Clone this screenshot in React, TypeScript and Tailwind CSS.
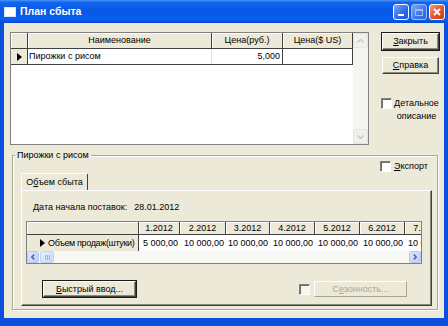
import React from "react";

type Col = { id: number; title: string; w: number };

const topCols: Col[] = [
  { id: 1, title: "", w: 17 },
  { id: 2, title: "Наименование", w: 184 },
  { id: 3, title: "Цена(руб.)", w: 71 },
  { id: 4, title: "Цена($ US)", w: 70 },
];

const months: Col[] = [
  { id: 1, title: "1.2012", w: 41 },
  { id: 2, title: "2.2012", w: 46 },
  { id: 3, title: "3.2012", w: 44 },
  { id: 4, title: "4.2012", w: 45 },
  { id: 5, title: "5.2012", w: 45 },
  { id: 6, title: "6.2012", w: 45 },
  { id: 7, title: "7.2012", w: 45 },
];

const sales: string[] = [
  "5 000,00",
  "10 000,00",
  "10 000,00",
  "10 000,00",
  "10 000,00",
  "10 000,00",
  "10 000,00",
];

function Arrow() {
  return (
    <div className="w-0 h-0 shrink-0 border-y-[4px] border-y-transparent border-l-[5px] border-l-black" />
  );
}

function CheckBox({ disabled }: { disabled?: boolean }) {
  return (
    <div
      className={`w-[11px] h-[11px] shrink-0 border-t border-l border-t-[#808080] border-l-[#808080] border-b border-r border-b-white border-r-white shadow-[inset_1px_1px_0_#6a6a6a]
        ${disabled ? "bg-[#F6F5F0]" : "bg-white"}`}
    />
  );
}

function Button({
  children,
  strong,
  disabled,
  className,
}: {
  children: React.ReactNode;
  strong?: boolean;
  disabled?: boolean;
  className: string;
}) {
  return (
    <div
      className={`${className} ${strong ? "border border-[#1a1a1a]" : "border border-transparent"}`}
    >
      <div
        className={`h-full flex items-center justify-center bg-[#ECE9D8] border-t border-l border-white border-r border-b
          ${disabled ? "border-r-[#A7A491] border-b-[#A7A491] text-[#A9A696]" : "border-r-[#404040] border-b-[#404040] shadow-[inset_-1px_-1px_0_#8c8a80]"}`}
      >
        {children}
      </div>
    </div>
  );
}

function TitleBar() {
  return (
    <div className="h-[23px] shrink-0 flex items-center pl-[4px] pr-[3px] bg-[linear-gradient(to_bottom,#4a95f7_0%,#1266ee_10%,#0858e4_45%,#0a5ff0_85%,#0747d0_100%)]">
      <div className="w-[12px] h-[10px] bg-white border border-[#dbe6fb] mt-[1px]" />
      <span className="ml-[4px] text-white font-bold text-[10.5px] leading-none">
        План сбыта
      </span>
      <div className="ml-auto flex gap-[2px] mt-[1px]">
        <div className="w-[16px] h-[16px] rounded-[3px] border border-white bg-[linear-gradient(135deg,#7aa9fb,#2b68e8_60%,#1e55d4)] flex items-end pl-[4px] pb-[3px]">
          <div className="w-[6px] h-[2px] bg-white" />
        </div>
        <div className="w-[16px] h-[16px] rounded-[3px] border border-[#9dbcf5] bg-[linear-gradient(135deg,#7aa9fb,#3d75ea_60%,#3363d8)] flex items-center justify-center">
          <div className="w-[8px] h-[7px] border border-[#9dbcf5] border-t-2" />
        </div>
        <div className="w-[16px] h-[16px] rounded-[3px] border border-white bg-[linear-gradient(135deg,#f29a7a,#e2552d_55%,#c93d14)] flex items-center justify-center">
          <svg width="8" height="8" viewBox="0 0 8 8">
            <path d="M1 1 L7 7 M7 1 L1 7" stroke="white" strokeWidth="1.8" />
          </svg>
        </div>
      </div>
    </div>
  );
}

function TopGrid() {
  return (
    <div className="w-[359px] h-[113px] shrink-0 border border-[#808080] bg-white flex">
      <div className="flex-1 flex flex-col">
        <div className="h-[16px] flex border-b border-[#404040]">
          {topCols.map((col: Col) => (
            <div
              key={col.id}
              style={{ width: col.w }}
              className="h-full bg-[#ECE9D8] border-r border-[#404040] shadow-[inset_1px_1px_0_#fff] flex items-center justify-center"
            >
              {col.title}
            </div>
          ))}
        </div>
        <div className="h-[16px] flex border-b border-[#404040] w-[342px]">
          <div className="w-[17px] h-full bg-[#ECE9D8] border-r border-[#404040] flex items-center justify-center pl-[1px]">
            <Arrow />
          </div>
          <div className="w-[184px] h-full border-r border-[#E4E2DA] flex items-center pl-[1px]">
            Пирожки с рисом
          </div>
          <div className="w-[71px] h-full border-r border-[#404040] flex items-center justify-end pr-[2px]">
            5,000
          </div>
          <div className="w-[70px] h-full border-r border-[#404040]" />
        </div>
      </div>
      <div className="w-[15px] flex flex-col bg-[#F6F5F1]">
        <div className="h-[15px] border border-[#E6E4DB] rounded-[2px] bg-[#F1F0EA] flex items-center justify-center">
          <svg width="7" height="4" viewBox="0 0 7 4">
            <path d="M0.5 3.5 L3.5 0.5 L6.5 3.5" stroke="#C9C7BA" strokeWidth="1.4" fill="none" />
          </svg>
        </div>
        <div className="flex-1" />
        <div className="h-[15px] border border-[#E6E4DB] rounded-[2px] bg-[#F1F0EA] flex items-center justify-center">
          <svg width="7" height="4" viewBox="0 0 7 4">
            <path d="M0.5 0.5 L3.5 3.5 L6.5 0.5" stroke="#C9C7BA" strokeWidth="1.4" fill="none" />
          </svg>
        </div>
      </div>
    </div>
  );
}

function SalesGrid() {
  return (
    <div className="ml-[4px] mt-[8px] w-[396px] h-[43px] border border-[#808080] bg-white flex flex-col overflow-hidden">
      <div className="h-[13px] flex border-b border-[#404040] bg-[#ECE9D8] overflow-hidden">
        <div className="w-[112px] shrink-0 h-full border-r border-[#404040] shadow-[inset_1px_1px_0_#fff]" />
        {months.map((m: Col) => (
          <div
            key={m.id}
            style={{ width: m.w }}
            className="shrink-0 h-full border-r border-[#404040] shadow-[inset_1px_1px_0_#fff] flex items-center justify-center whitespace-nowrap"
          >
            {m.title}
          </div>
        ))}
      </div>
      <div className="h-[16px] flex overflow-hidden">
        <div className="w-[112px] shrink-0 h-full bg-[#ECE9D8] border-r border-[#404040] flex items-center pl-[13px] gap-[3px] whitespace-nowrap overflow-hidden">
          <Arrow />
          <span className="tracking-[-0.35px]">Объем продаж(штуки)</span>
        </div>
        {months.map((m: Col, i: number) => (
          <div
            key={m.id}
            style={{ width: m.w }}
            className="shrink-0 h-full flex items-center justify-end pr-[2px] whitespace-nowrap overflow-hidden"
          >
            {sales[i]}
          </div>
        ))}
      </div>
      <div className="flex-1 flex bg-[#F7F7F3]">
        <div className="w-[12px] h-full rounded-[2px] border border-[#B5C8F3] bg-[linear-gradient(135deg,#dde7fe,#bccefa)] flex items-center justify-center">
          <svg width="4" height="6" viewBox="0 0 4 6">
            <path d="M3.3 0.5 L0.8 3 L3.3 5.5" stroke="#4D6185" strokeWidth="1.4" fill="none" />
          </svg>
        </div>
        <div className="w-[14px] h-full ml-[1px] rounded-[2px] border border-[#C2D2F5] bg-[linear-gradient(135deg,#e6eefe,#c9d8fc)] flex items-center justify-center gap-[1px]">
          <div className="w-[1px] h-[5px] bg-[#9fb5ea]" />
          <div className="w-[1px] h-[5px] bg-[#9fb5ea]" />
          <div className="w-[1px] h-[5px] bg-[#9fb5ea]" />
        </div>
        <div className="flex-1" />
        <div className="w-[12px] h-full rounded-[2px] border border-[#B5C8F3] bg-[linear-gradient(135deg,#dde7fe,#bccefa)] flex items-center justify-center">
          <svg width="4" height="6" viewBox="0 0 4 6">
            <path d="M0.7 0.5 L3.2 3 L0.7 5.5" stroke="#4D6185" strokeWidth="1.4" fill="none" />
          </svg>
        </div>
      </div>
    </div>
  );
}

export default function App() {
  return (
    <div className="w-[448px] h-[326px] flex flex-col overflow-hidden bg-[#0A4FDD] font-['Liberation_Sans',Arial,sans-serif] text-[9px] leading-none text-black">
      <TitleBar />
      <div className="flex-1 mx-[4px] mb-[8px] bg-[#ECE9D8] flex flex-col">
        {/* products list + buttons */}
        <div className="flex pt-[9px] pl-[6px]">
          <TopGrid />
          <div className="ml-[12px] w-[59px] flex flex-col">
            <Button strong className="h-[19px]">
              <span>
                <u>З</u>акрыть
              </span>
            </Button>
            <Button className="h-[19px] mt-[5px]">
              <span>
                <u>С</u>правка
              </span>
            </Button>
            <div className="mt-[23px] flex items-start">
              <CheckBox />
              <div className="w-[47px] ml-[1px] text-center leading-[13px] -mt-[1px]">
                <u>Д</u>етальное описание
              </div>
            </div>
          </div>
        </div>

        {/* group box */}
        <div className="relative mt-[10px] ml-[8px] mr-[6px] h-[155px] border border-[#A9A692] shadow-[1px_1px_0_#fff,inset_1px_1px_0_#fff] flex flex-col pt-[5px]">
          <div className="absolute -top-[6px] left-[2px] bg-[#ECE9D8] px-[2px] leading-[11px]">
            Пирожки с рисом
          </div>
          <div className="h-[11px] flex items-center pl-[367px] gap-[3px]">
            <CheckBox />
            <span>
              <u>Э</u>кспорт
            </span>
          </div>
          <div className="ml-[8px] mt-[1px] w-[67px] h-[17px] border-t border-l border-white border-r border-r-[#404040] rounded-t-[2px] flex items-center justify-center">
            <span>
              О<u>б</u>ъем сбыта
            </span>
          </div>
          <div className="ml-[8px] mr-[5px] h-[116px] border-l border-t border-white border-r border-b border-r-[#404040] border-b-[#404040] shadow-[inset_-1px_-1px_0_#8c8a80] flex flex-col">
            <div className="mt-[11px] h-[11px] pl-[11px] flex items-center gap-[7px]">
              <span>Дата начала поставок:</span>
              <span>28.01.2012</span>
            </div>
            <SalesGrid />
            <div className="mt-[16px] h-[18px] flex items-center">
              <Button strong className="ml-[20px] w-[95px] h-[18px]">
                <span>
                  <u>Б</u>ыстрый ввод...
                </span>
              </Button>
              <div className="flex-1" />
              <CheckBox disabled />
              <Button disabled className="ml-[3px] mr-[23px] w-[95px] h-[18px]">
                <span>
                  С<u>е</u>зонность...
                </span>
              </Button>
            </div>
          </div>
        </div>
      </div>
    </div>
  );
}
